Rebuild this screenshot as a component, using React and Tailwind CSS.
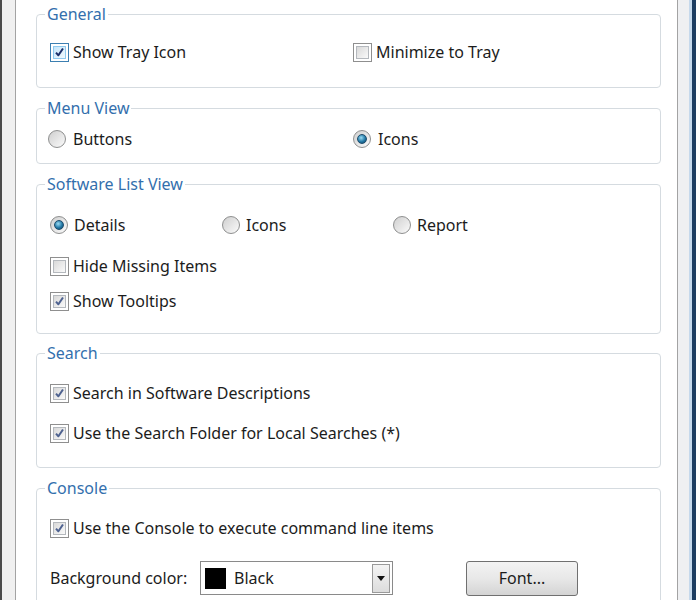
import clsx from "clsx";

const font = "font-['Noto_Sans','Liberation_Sans',sans-serif]";

const Check = ({ checked, hot }) => (
  <span
    className={clsx(
      "flex h-[19px] w-[19px] shrink-0 items-center justify-center border bg-white p-[2px]",
      hot ? "border-[#3c7fb1]" : "border-[#8f8f8f]"
    )}
  >
    <span
      className={clsx(
        "flex h-full w-full items-center justify-center border",
        hot
          ? "border-[#8fcaef] bg-linear-to-br from-[#c6e6fa] to-[#f0f9fe]"
          : "border-[#b4b8bd] bg-linear-to-br from-[#d9d9d9] to-[#fafafa]"
      )}
    >
      {checked && (
        <svg viewBox="0 0 12 12" className="h-[12px] w-[12px]">
          <path
            d="M2.2 6.6 L4.8 9.6 L9.8 2.2"
            fill="none"
            stroke={hot ? "#1b2f6a" : "#4e6290"}
            strokeWidth="2.2"
            strokeLinejoin="round"
          />
        </svg>
      )}
    </span>
  </span>
);

const Radio = ({ checked }) => (
  <span className="flex h-[18px] w-[18px] shrink-0 items-center justify-center rounded-full border border-[#8e8f8f] bg-linear-to-br from-[#cfcfcf] to-[#fbfbfb]">
    {checked && (
      <span className="h-[10px] w-[10px] rounded-full border border-[#1d4c6c] bg-[radial-gradient(circle_at_40%_35%,#9bdcf4,#2379a6_55%,#0d3f60)]" />
    )}
  </span>
);

const CheckRow = ({ label, checked, hot }) => (
  <label className="flex h-[22px] items-center gap-[4px]">
    <Check checked={checked} hot={hot} />
    <span>{label}</span>
  </label>
);

const RadioRow = ({ label, checked, wide }) => (
  <label className={clsx("flex h-[22px] items-center", wide ? "gap-[6px]" : "gap-[7px]")}>
    <Radio checked={checked} />
    <span>{label}</span>
  </label>
);

const Group = ({ title, className, children }) => (
  <fieldset className={clsx("shrink-0 rounded-[4px] border border-[#d5dbe0]", className)}>
    <legend className="ml-[8px] px-[2px] text-[16px] leading-[20px] text-[#336fad]">{title}</legend>
    {children}
  </fieldset>
);

export default function App() {
  return (
    <div className={clsx("flex h-[600px] w-[696px] overflow-hidden text-[16px] text-[#1c1c1c]", font)}>
      <div className="w-[2px] bg-[#4b4b4b]" />
      <div className="w-[13px] bg-[#f0f0f0]" />
      <div className="flex w-[663px] flex-col gap-[10px] border-x border-[#a3a3a3] bg-white pt-[4px] pl-[20px] pr-[16px]">
        <Group title="General" className="h-[84px]">
          <div className="grid grid-cols-[303px_1fr] pt-[17px] pl-[13px]">
            <CheckRow label="Show Tray Icon" checked hot />
            <CheckRow label="Minimize to Tray" />
          </div>
        </Group>

        <Group title="Menu View" className="h-[66px]">
          <div className="grid grid-cols-[305px_1fr] pt-[10px] pl-[11px]">
            <RadioRow label="Buttons" />
            <RadioRow label="Icons" checked />
          </div>
        </Group>

        <Group title="Software List View" className="h-[160px]">
          <div className="flex flex-col pt-[20px] pl-[13px]">
            <div className="grid grid-cols-[172px_171px_1fr]">
              <RadioRow label="Details" checked wide />
              <RadioRow label="Icons" wide />
              <RadioRow label="Report" wide />
            </div>
            <div className="mt-[19px] flex flex-col gap-[13px]">
              <CheckRow label="Hide Missing Items" />
              <CheckRow label="Show Tooltips" checked />
            </div>
          </div>
        </Group>

        <Group title="Search" className="-mt-[1px] h-[125px]">
          <div className="flex flex-col gap-[18px] pt-[19px] pl-[13px]">
            <CheckRow label="Search in Software Descriptions" checked />
            <CheckRow label="Use the Search Folder for Local Searches (*)" checked />
          </div>
        </Group>

        <Group title="Console" className="h-[160px]">
          <div className="flex flex-col pt-[19px] pl-[13px]">
            <CheckRow label="Use the Console to execute command line items" checked />
            <div className="mt-[21px] flex h-[36px] items-center">
              <span className="w-[150px]">Background color:</span>
              <div className="flex h-[34px] w-[193px] items-center border border-[#8a8a8a] bg-white pr-[2px] pl-[4px]">
                <span className="h-[21px] w-[21px] bg-black" />
                <span className="ml-[8px] flex-1">Black</span>
                <span className="flex h-[29px] w-[18px] items-center justify-center border border-[#9a9a9a] bg-linear-to-b from-[#f4f4f4] to-[#dcdcdc]">
                  <svg viewBox="0 0 8 5" className="h-[5px] w-[8px]">
                    <path d="M0 0 H8 L4 5 Z" fill="#111" />
                  </svg>
                </span>
              </div>
              <button className="ml-[73px] flex h-[35px] w-[112px] items-center justify-center rounded-[3px] border border-[#707070] bg-linear-to-b from-[#f3f3f3] via-[#e8e8e8] to-[#d4d4d4] text-[16px] text-[#1c1c1c]">
                Font...
              </button>
            </div>
          </div>
        </Group>
      </div>
      <div className="w-[11px] bg-[#eff0f2]" />
      <div className="w-[3px] bg-[#c6d9ec]" />
      <div className="w-[4px] bg-[#1d3d62]" />
    </div>
  );
}
